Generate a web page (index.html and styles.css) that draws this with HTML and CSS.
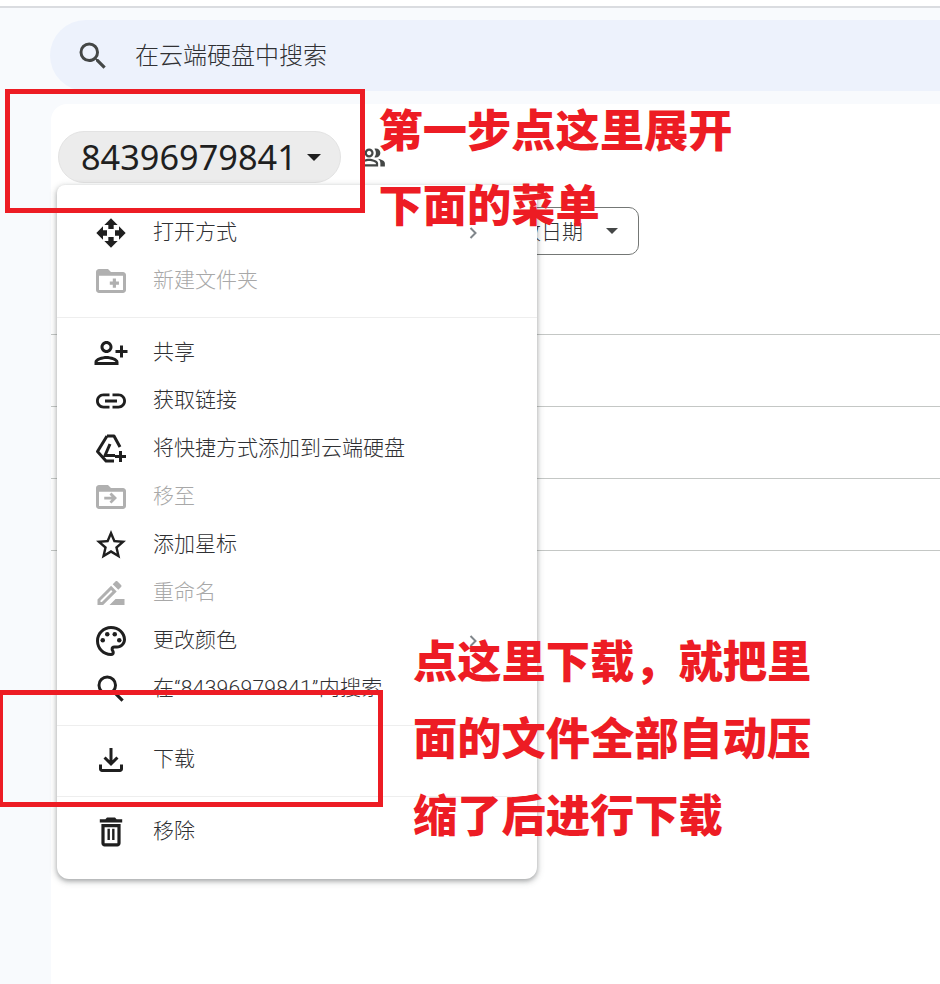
FILE: index.html
```html
<!DOCTYPE html>
<html lang="zh-CN">
<head>
<meta charset="utf-8">
<title>云端硬盘</title>
<link rel="stylesheet" href="styles.css">
</head>
<body>
<div class="topbar"></div>
<header class="search">
  <svg class="search-icon" viewBox="0 0 24 24"><path d="M15.5 14h-.79l-.28-.27A6.471 6.471 0 0 0 16 9.5 6.5 6.5 0 1 0 9.5 16c1.61 0 3.09-.59 4.23-1.57l.27.28v.79l5 4.99L20.49 19l-4.99-5zm-6 0C7.01 14 5 11.99 5 9.5S7.01 5 9.5 5 14 7.01 14 9.5 11.99 14 9.5 14z"/></svg>
  <span class="search-text">在云端硬盘中搜索</span>
</header>
<main class="panel">
  <div class="title-row">
    <div class="chip"><span class="chip-name">84396979841</span><span class="caret"></span></div>
    <svg class="people" viewBox="0 0 24 24"><path d="M16.67 13.13C18.04 14.06 19 15.32 19 17v3h4v-3c0-2.18-3.57-3.47-6.33-3.87zM15 12c2.21 0 4-1.79 4-4s-1.79-4-4-4c-.47 0-.91.1-1.33.24C14.5 5.27 15 6.58 15 8s-.5 2.73-1.33 3.76c.42.14.86.24 1.33.24zM9 12c2.21 0 4-1.79 4-4s-1.79-4-4-4-4 1.79-4 4 1.79 4 4 4zm0-6c1.1 0 2 .9 2 2s-.9 2-2 2-2-.9-2-2 .9-2 2-2zM9 13c-2.67 0-8 1.34-8 4v3h16v-3c0-2.66-5.33-4-8-4zm6 5H3v-.99C3.2 16.29 6.3 15 9 15s5.8 1.29 6 2v1z"/></svg>
  </div>
  <div class="filter-row">
    <div class="filter"><span class="filter-text">修改日期</span><span class="caret caret-small"></span></div>
  </div>
  <div class="rows">
    <div class="row"></div>
    <div class="row"></div>
    <div class="row"></div>
  </div>
</main>

<nav class="menu">
  <div class="item">
    <svg class="ic" viewBox="-1.5 -1.5 27 27"><path d="M10 9h4V6h3l-5-5-5 5h3v3zm-1 1H6V7l-5 5 5 5v-3h3v-4zm14 2l-5-5v3h-3v4h3v3l5-5zm-9 3h-4v3H7l5 5 5-5h-3v-3z"/></svg>
    <span>打开方式</span>
    <svg class="chev" viewBox="0 0 8 12"><path d="M1.500 1l5 5-5 5"/></svg>
  </div>
  <div class="item off">
    <svg class="ic" viewBox="0 0 24 24"><path d="M20 6h-8l-2-2H4c-1.100 0-2 .9-2 2v12c0 1.100.9 2 2 2h16c1.100 0 2-.9 2-2V8c0-1.100-.9-2-2-2zm0 12H4V8.500h16V18zM13.200 10.400h2.100v2h2v2.100h-2v2h-2.100v-2h-2v-2.100h2z"/></svg>
    <span>新建文件夹</span>
  </div>
  <div class="sep"></div>
  <div class="item">
    <svg class="ic" viewBox="0 0 24 24"><path d="M9 12c2.21 0 4-1.790 4-4s-1.790-4-4-4-4 1.790-4 4 1.790 4 4 4zm0-6c1.100 0 2 .9 2 2s-.9 2-2 2-2-.9-2-2 .9-2 2-2zm0 8c-2.670 0-8 1.340-8 4v2h16v-2c0-2.660-5.330-4-8-4zm-6 4c.2-.71 3.300-2 6-2 2.690 0 5.780 1.280 6 2H3zm17-3v-3h3v-2h-3V7h-2v3h-3v2h3v3h2z"/></svg>
    <span>共享</span>
  </div>
  <div class="item">
    <svg class="ic" viewBox="0 0 24 24"><path d="M3.900 12c0-1.710 1.390-3.100 3.100-3.100h4V7H7c-2.760 0-5 2.240-5 5s2.240 5 5 5h4v-1.900H7c-1.710 0-3.100-1.390-3.100-3.100zM8 13h8v-2H8v2zm9-6h-4v1.900h4c1.710 0 3.100 1.390 3.100 3.100s-1.390 3.100-3.100 3.100h-4V17h4c2.760 0 5-2.240 5-5s-2.240-5-5-5z"/></svg>
    <span>获取链接</span>
  </div>
  <div class="item">
    <svg class="ic ic-line" viewBox="0 0 36 36"><path d="M14 5h7l6 11M21 30h-8L4.500 20.500 14 5M17 13l-5 11.500h10M27.500 20v11M22 25.500h11"/></svg>
    <span>将快捷方式添加到云端硬盘</span>
  </div>
  <div class="item off">
    <svg class="ic" viewBox="0 0 24 24"><path d="M20 6h-8l-2-2H4c-1.100 0-2 .9-2 2v12c0 1.100.9 2 2 2h16c1.100 0 2-.9 2-2V8c0-1.100-.9-2-2-2zm0 12H4V8.500h16V18zM12.300 9L11 10.300l1.400 1.500H7.500v1.800h4.900L11 15.100l1.300 1.300 3.700-3.700z"/></svg>
    <span>移至</span>
  </div>
  <div class="item">
    <svg class="ic" viewBox="0 0 24 24"><path d="M22 9.240l-7.190-.62L12 2 9.190 8.630 2 9.240l5.460 4.730L5.820 21 12 17.270 18.180 21l-1.630-7.030L22 9.240zM12 15.400l-3.760 2.270 1-4.280-3.320-2.880 4.380-.38L12 6.100l1.710 4.040 4.380.38-3.320 2.880 1 4.280L12 15.400z"/></svg>
    <span>添加星标</span>
  </div>
  <div class="item off">
    <svg class="ic" viewBox="0 0 24 24"><path d="M15 16l-4 4h10v-4h-6zm-2.940-8.810L3 16.250V20h3.750l9.060-9.060-3.750-3.750zM5.920 18H5v-.92l7.060-7.060.92.92L5.920 18zm12.790-9.960c.39-.39.39-1.020 0-1.410l-2.340-2.340c-.2-.2-.45-.29-.71-.29-.25 0-.51.1-.7.29l-1.830 1.830 3.750 3.750 1.830-1.830z"/></svg>
    <span>重命名</span>
  </div>
  <div class="item">
    <svg class="ic" viewBox="0 0 24 24"><path d="M12 22C6.490 22 2 17.510 2 12S6.490 2 12 2s10 4.040 10 9c0 3.310-2.690 6-6 6h-1.770c-.28 0-.5.22-.5.5 0 .12.05.23.13.33.41.47.64 1.060.64 1.670A2.500 2.500 0 0 1 12 22zm0-18c-4.410 0-8 3.590-8 8s3.590 8 8 8c.28 0 .5-.22.5-.5a.54.54 0 0 0-.14-.35c-.41-.46-.63-1.050-.63-1.650a2.500 2.500 0 0 1 2.500-2.500H16c2.210 0 4-1.790 4-4 0-3.860-3.590-7-8-7z"/><circle cx="6.500" cy="11.500" r="1.500"/><circle cx="9.500" cy="7.500" r="1.500"/><circle cx="14.500" cy="7.500" r="1.500"/><circle cx="17.500" cy="11.500" r="1.500"/></svg>
    <span>更改颜色</span>
    <svg class="chev" viewBox="0 0 8 12"><path d="M1.500 1l5 5-5 5"/></svg>
  </div>
  <div class="item">
    <svg class="ic" viewBox="0 0 24 24"><path d="M15.500 14h-.79l-.28-.27A6.471 6.471 0 0 0 16 9.500 6.500 6.500 0 1 0 9.500 16c1.610 0 3.090-.59 4.230-1.570l.27.28v.79l5 4.990L20.490 19l-4.990-5zm-6 0C7.010 14 5 11.990 5 9.500S7.010 5 9.500 5 14 7.010 14 9.500 11.990 14 9.500 14z"/></svg>
    <span class="quoted">在“84396979841”内搜索</span>
  </div>
  <div class="sep"></div>
  <div class="item">
    <svg class="ic" viewBox="0 0 24 24"><path d="M18 15v3H6v-3H4v3c0 1.100.9 2 2 2h12c1.100 0 2-.9 2-2v-3h-2zm-1-4l-1.410-1.410L13 12.170V4h-2v8.170L8.410 9.590 7 11l5 5 5-5z"/></svg>
    <span>下载</span>
  </div>
  <div class="sep"></div>
  <div class="item">
    <svg class="ic" viewBox="0.75 0.75 22.5 22.5"><path d="M16 9v10H8V9h8m-1.500-6h-5l-1 1H5v2h14V4h-3.500l-1-1zM18 7H6v12c0 1.100.9 2 2 2h8c1.100 0 2-.9 2-2V7zM9.800 10h1.500v7H9.800zM12.700 10h1.500v7h-1.500z"/></svg>
    <span>移除</span>
  </div>
</nav>

<div class="mark mark-chip"></div>
<div class="mark mark-download"></div>
<p class="note note-first">第一步点这里展开<br>下面的菜单</p>
<p class="note note-second">点这里下载，就把里<br>面的文件全部自动压<br>缩了后进行下载</p>
</body>
</html>
```

FILE: styles.css
```css
* { box-sizing: border-box; }
html, body { margin: 0; height: 100%; }
body {
  position: relative;
  overflow: hidden;
  height: 984px;
  background: #f8fafd;
  font-family: "Noto Sans CJK SC", "Noto Sans", sans-serif;
  color: #3c4043;
}
.topbar { height: 8px; background: #fff; border-bottom: 2px solid #dadce0; }
.search {
  display: flex;
  align-items: center;
  height: 71px;
  margin: 12px -40px 0 50px;
  padding-left: 24.500px;
  gap: 24.500px;
  background: #edf2fc;
  border-radius: 36px 0 0 36px;
}
.search-icon { flex: none; width: 36px; height: 36px; fill: #444746; }
.search-text { padding-bottom: 4px; font-size: 24px; font-weight: 300; color: #303134; }
.panel {
  height: 880px;
  margin: 13px 0 0 51px;
  padding-top: 27px;
  background: #fff;
  border-radius: 16px 0 0 0;
}
.title-row { display: flex; align-items: center; height: 52px; padding-left: 7px; }
.chip {
  display: flex;
  align-items: center;
  width: 283px;
  height: 52px;
  padding-left: 22px;
  background: #ececec;
  border: 1px solid #e3e3e3;
  border-radius: 26px;
}
.chip-name { flex: none; width: 214px; font-family: "Noto Sans", sans-serif; font-size: 34.300px; line-height: 1; color: #1f1f1f; }
.caret {
  width: 0;
  height: 0;
  margin-left: 12px;
  border-style: solid;
  border-width: 7px 7.500px 0;
  border-color: #1f1f1f transparent transparent;
}
.people { width: 27px; height: 27px; margin-left: 18px; fill: #444746; }
.filter-row { display: flex; justify-content: flex-end; margin-top: 24px; padding-right: 301px; }
.filter {
  display: flex;
  align-items: center;
  width: 190px;
  height: 48px;
  padding-left: 49px;
  border: 1px solid #747775;
  border-radius: 10px;
}
.filter-text { flex: none; width: 84px; padding-bottom: 2px; font-size: 21px; font-weight: 300; color: #303134; }
.caret-small { margin-left: 23px; border-width: 6px 6px 0; border-color: #444746 transparent transparent; }
.rows { margin-top: 79px; border-top: 1px solid #c4c7c5; }
.row { height: 72px; border-bottom: 1px solid #c4c7c5; }

.menu {
  position: absolute;
  left: 57px;
  top: 185px;
  width: 480px;
  height: 694px;
  padding: 24px 0;
  background: #fff;
  border-radius: 8px 8px 12px 12px;
  box-shadow: 0 2px 6px 2px rgba(60, 64, 67, .15), 0 2px 4px rgba(60, 64, 67, .35);
}
.item {
  display: flex;
  align-items: center;
  height: 48px;
  padding: 0 60px 0 36px;
  gap: 24px;
  font-family: Roboto, "Noto Sans CJK SC", sans-serif;
  font-size: 21px;
  font-weight: 300;
  color: #2f3033;
}
.item span { padding-bottom: 2px; line-height: 30px; }
.item .quoted { letter-spacing: .28px; }
.ic { flex: none; width: 36px; height: 36px; fill: #1f1f1f; }
.ic-line { fill: none; stroke: #1f1f1f; stroke-width: 3; stroke-linejoin: round; }
.chev { width: 8px; height: 12px; margin-left: auto; fill: none; stroke: #80868b; stroke-width: 2; }
.item.off { color: #a8a8a8; }
.off .ic { fill: #b0b0b0; }
.sep { height: 1px; margin: 12px 0 10.500px; background: #eeeeee; }

.mark { position: absolute; border: 5px solid #ed1c24; }
.mark-chip { left: 5px; top: 89px; width: 360px; height: 124px; }
.mark-download { left: -2px; top: 690px; width: 385px; height: 117px; }
.note {
  position: absolute;
  margin: 0;
  font-size: 44.250px;
  font-weight: 900;
  color: #ed1c24;
  white-space: nowrap;
}
.note-first { left: 378.500px; top: 91px; line-height: 75px; }
.note-second { left: 413px; top: 621px; line-height: 77px; }
```
